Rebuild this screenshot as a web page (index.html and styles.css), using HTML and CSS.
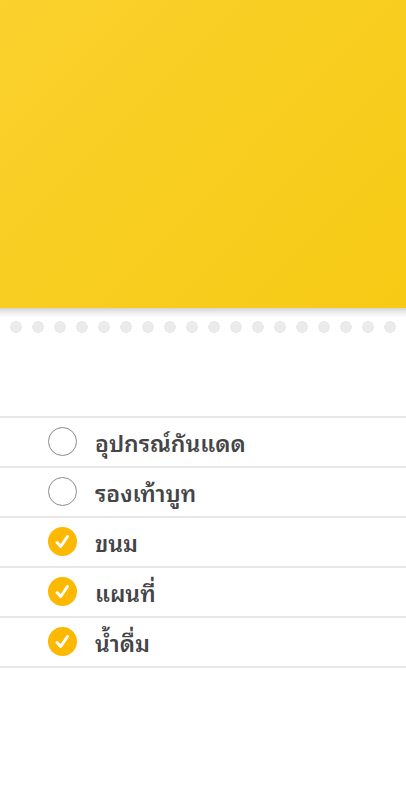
FILE: index.html
```html
<!DOCTYPE html>
<html lang="th">
<head>
<meta charset="utf-8">
<meta name="viewport" content="width=device-width, initial-scale=1">
<title>รายการ</title>
<link rel="stylesheet" href="styles.css">
</head>
<body>
<header class="cover"></header>
<div class="edge"></div>
<div class="perforation"></div>
<main>
<ul class="list">
<li><label class="item"><span class="mark"><input class="check" type="checkbox"><svg class="tick" viewBox="0 0 29 29" aria-hidden="true"><path d="M9 15.500l3.700 4L19.500 9.500"/></svg></span><span class="name">อุปกรณ์กันแดด</span></label></li>
<li><label class="item"><span class="mark"><input class="check" type="checkbox"><svg class="tick" viewBox="0 0 29 29" aria-hidden="true"><path d="M9 15.500l3.700 4L19.500 9.500"/></svg></span><span class="name">รองเท้าบูท</span></label></li>
<li><label class="item"><span class="mark"><input class="check" type="checkbox" checked><svg class="tick" viewBox="0 0 29 29" aria-hidden="true"><path d="M9 15.500l3.700 4L19.500 9.500"/></svg></span><span class="name">ขนม</span></label></li>
<li><label class="item"><span class="mark"><input class="check" type="checkbox" checked><svg class="tick" viewBox="0 0 29 29" aria-hidden="true"><path d="M9 15.500l3.700 4L19.500 9.500"/></svg></span><span class="name">แผนที่</span></label></li>
<li><label class="item"><span class="mark"><input class="check" type="checkbox" checked><svg class="tick" viewBox="0 0 29 29" aria-hidden="true"><path d="M9 15.500l3.700 4L19.500 9.500"/></svg></span><span class="name">น้ำดื่ม</span></label></li>
</ul>
</main>
</body>
</html>
```
FILE: styles.css
```css
* { box-sizing: border-box; }
body {
  margin: 0;
  background: #fff;
  color: #454547;
  font-family: "Noto Sans Thai Looped", "Noto Sans Thai", "Noto Sans", sans-serif;
}
.cover {
  height: 308px;
  background: linear-gradient(135deg, #fad12d, #f6ca14);
}
.edge {
  height: 10px;
  background: linear-gradient(#d4d4d4, #f0f0f0 50%, #fff);
}
.perforation {
  height: 12px;
  margin-top: 3px;
  background: radial-gradient(circle, #ebebeb 6px, transparent 6px) 5px 0 / 22px 12px repeat-x;
}
.list {
  margin: 83px 0 0;
  padding: 0;
  list-style: none;
  border-top: 2px solid #e8e8e8;
}
.item {
  display: flex;
  align-items: center;
  gap: 18px;
  height: 50px;
  padding: 0 0 2px 48px;
  border-bottom: 2px solid #e8e8e8;
  font-size: 23px;
  font-weight: 600;
  line-height: 32px;
}
.name { padding-top: 2px; }
.mark {
  display: grid;
  width: 29px;
  height: 29px;
}
.check, .tick {
  grid-area: 1 / 1;
  width: 29px;
  height: 29px;
}
.check {
  appearance: none;
  margin: 0;
  border: 1px solid #8a8a8a;
  border-radius: 50%;
}
.check:checked {
  border: 0;
  background: #fdb801;
}
.tick {
  display: none;
  fill: none;
  stroke: #fff;
  stroke-width: 3;
  stroke-linecap: round;
  stroke-linejoin: round;
  pointer-events: none;
}
.check:checked + .tick { display: block; }
```
